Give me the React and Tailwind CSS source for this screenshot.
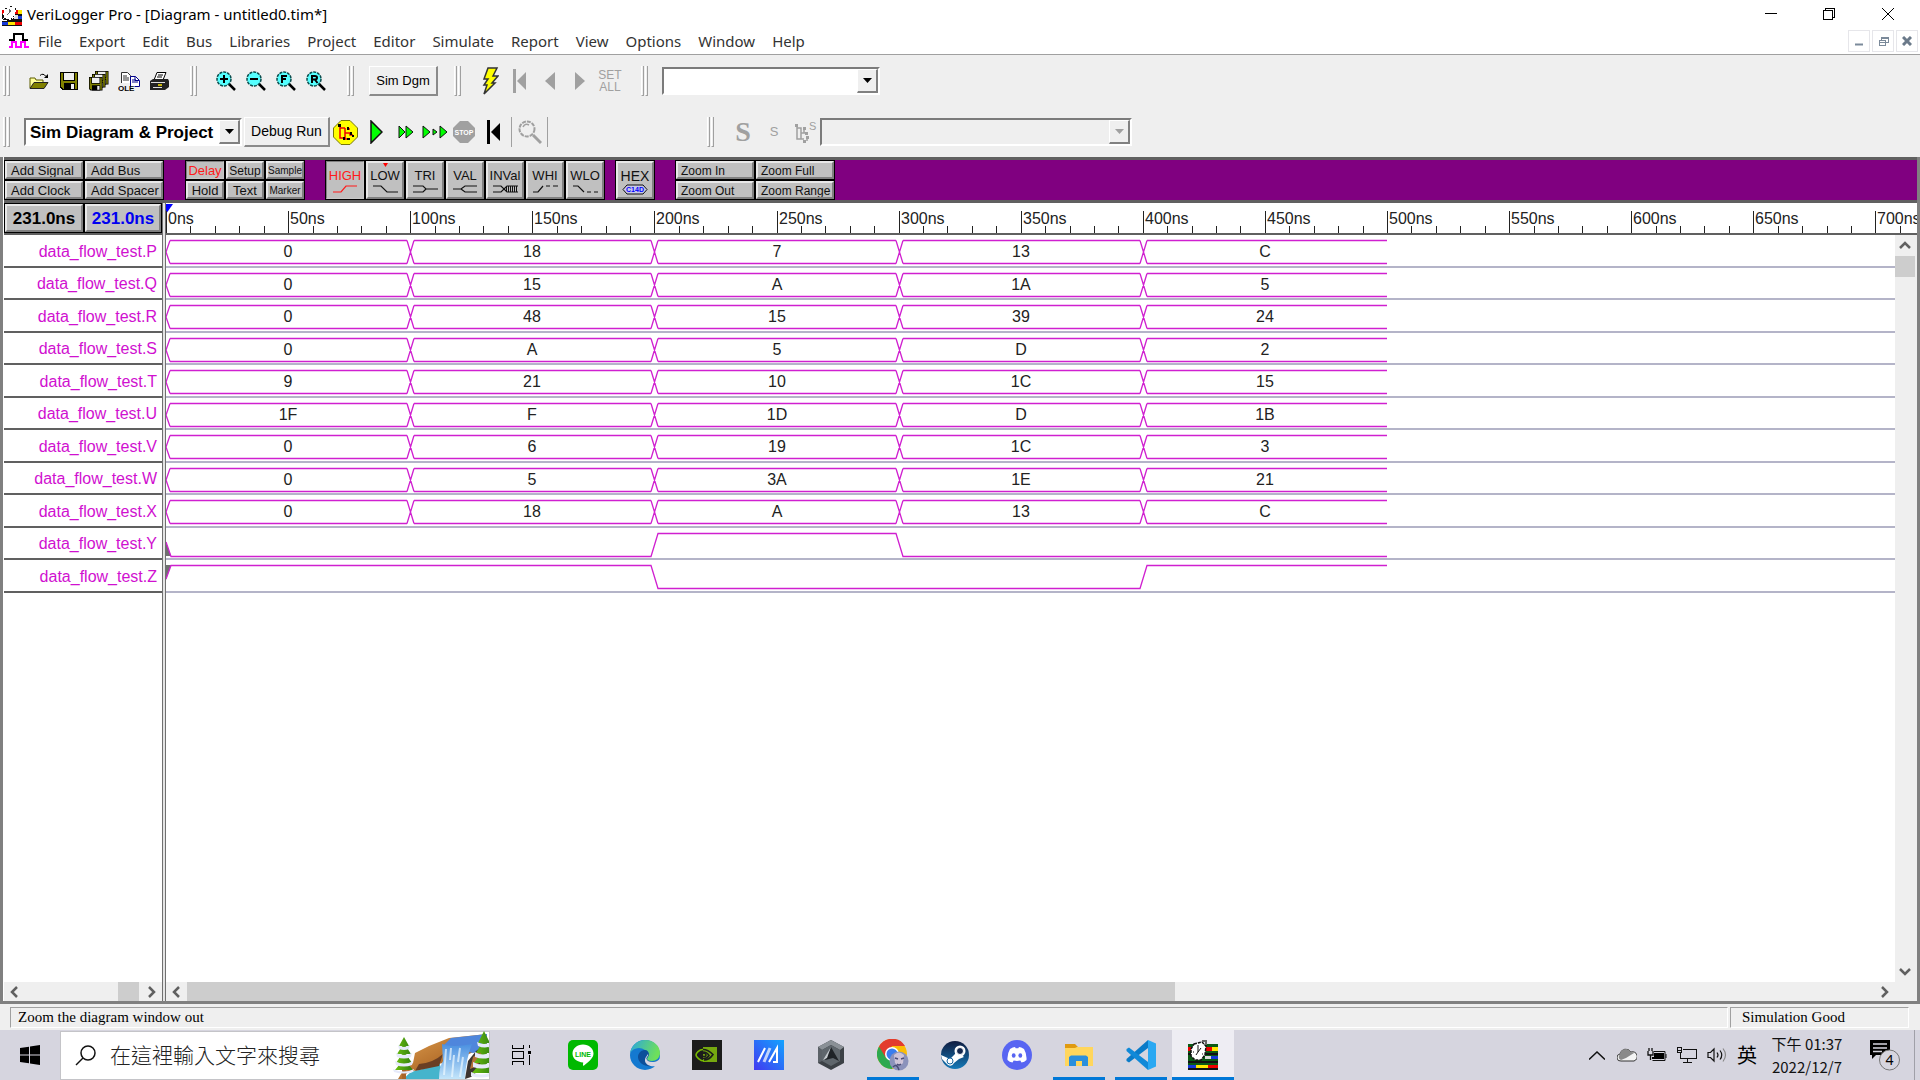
import React from "react";

const SANS = "font-['Liberation_Sans',Arial,sans-serif]";
const UI = "font-['Noto_Sans','Noto_Sans_CJK_TC',sans-serif]";
const CJK = "font-['Noto_Sans_CJK_TC','Noto_Sans',sans-serif]";

const PX_PER_NS = 2.442;
const at = (ns) => Math.round(ns * PX_PER_NS);

const MENUS = ["File", "Export", "Edit", "Bus", "Libraries", "Project", "Editor", "Simulate", "Report", "View", "Options", "Window", "Help"];

const BUSES = [
  ["P", ["0", "18", "7", "13", "C"]],
  ["Q", ["0", "15", "A", "1A", "5"]],
  ["R", ["0", "48", "15", "39", "24"]],
  ["S", ["0", "A", "5", "D", "2"]],
  ["T", ["9", "21", "10", "1C", "15"]],
  ["U", ["1F", "F", "1D", "D", "1B"]],
  ["V", ["0", "6", "19", "1C", "3"]],
  ["W", ["0", "5", "3A", "1E", "21"]],
  ["X", ["0", "18", "A", "13", "C"]],
  ["Y", null],
  ["Z", null],
];

/* ---------- window chrome ---------- */

function AppLogo({ className }) {
  return (
    <svg viewBox="0 0 20 20" className={className} shapeRendering="crispEdges" aria-hidden="true">
      <path d="M0 4h5v5H0z" fill="#e00" />
      <path d="M12 4h5v4h-5z" fill="#e00" />
      <path d="M16 4h4v4h-4z" fill="#ffe600" />
      <path d="M0 8h20v8H0z" fill="#111" />
      <path d="M12 9h4v4h-4z" fill="#ddd" />
      <path d="M16 10h4v3h-4z" fill="#1538d8" />
      <path d="M0 16h6v3H0z" fill="#1538d8" />
      <path d="M6 16h7v3H6z" fill="#ffe600" />
      <path d="M13 16h7v3h-7z" fill="#e00" />
      <path d="M0 19h20v1H0z" fill="#111" />
      <path d="M3 3l3-2 6-1 2 2-1 9-4 3-5-1-3-4z" fill="#fff" />
      <path d="M3 3l3-2M8 0h3M13 2v3M12 10l-3 4M1 9l3 4" stroke="#111" fill="none" strokeDasharray="2 1" />
      <path d="M7 3v4l2-3M7 7L5 9" stroke="#666" fill="none" />
      <path d="M3 11l-3 3h5" stroke="#fff" fill="none" />
    </svg>
  );
}

function TitleBar() {
  return (
    <header className="flex h-7 items-center bg-white pl-0.5 pr-0.5">
      <AppLogo className="mt-1 h-5 w-5" />
      <h1 className={`${UI} ml-[5px] text-[15px] leading-5 text-black`}>VeriLogger Pro - [Diagram - untitled0.tim*]</h1>
      <div className="ml-auto flex h-7 items-center">
        <button aria-label="Minimize" className="flex h-7 w-[58px] items-center justify-center">
          <svg width="12" height="12" shapeRendering="crispEdges"><path d="M0 5.500h12" stroke="#000" /></svg>
        </button>
        <button aria-label="Restore" className="flex h-7 w-[58px] items-center justify-center">
          <svg width="12" height="12" fill="none" stroke="#000" shapeRendering="crispEdges"><path d="M.5 2.500h9v9h-9zM2.500 2.500v-2h9v9h-2" /></svg>
        </button>
        <button aria-label="Close" className="flex h-7 w-[60px] items-center justify-center">
          <svg width="12" height="12" stroke="#000"><path d="M0 0l12 12M12 0L0 12" /></svg>
        </button>
      </div>
    </header>
  );
}

function MenuBar() {
  const box = "flex h-[22px] w-[22px] items-center justify-center border border-[#e6e6ea]";
  return (
    <nav className="flex h-[27px] items-center border-b border-[#a0a0a0] bg-white pl-2">
      <svg width="21" height="16" className="mr-px shrink-0" fill="none" strokeWidth="2" shapeRendering="crispEdges" aria-hidden="true">
        <path d="M1 7h5V1h9v6h5" stroke="#000" />
        <path d="M1 14h3V9h4v5h5V9h4v5h4" stroke="#f0f" />
      </svg>
      {MENUS.map((m) => (
        <button key={m} className={`${UI} pl-2 pr-[9px] text-[15px] leading-5 text-[#333]`}>{m}</button>
      ))}
      <div className="ml-auto flex items-center gap-0.5 pr-0.5">
        <button aria-label="Minimize diagram" className={box}><svg width="8" height="10"><path d="M0 8.500h8" stroke="#7b8a9a" strokeWidth="2" /></svg></button>
        <button aria-label="Restore diagram" className={box}>
          <svg width="11" height="10" fill="none" stroke="#7b8a9a" shapeRendering="crispEdges"><path d="M1 4.500h6v5H1zM1 6h6M3.500 4V1h6.500v5H8M3.500 2h6" /></svg>
        </button>
        <button aria-label="Close diagram" className={box}><svg width="10" height="10"><path d="M1 1l8 8M9 1L1 9" stroke="#6b7a8a" strokeWidth="3" /></svg></button>
      </div>
    </nav>
  );
}

/* ---------- toolbars ---------- */

function Grip() {
  return (
    <span className="flex h-[30px] shrink-0 gap-px">
      <span className="w-[3px] border-b border-l border-r border-b-[#a0a0a0] border-l-white border-r-[#a0a0a0]" />
      <span className="w-[3px] border-b border-l border-r border-b-[#a0a0a0] border-l-white border-r-[#a0a0a0]" />
    </span>
  );
}

function Tool({ label, children, wide }) {
  return (
    <button aria-label={label} title={label} className={`flex h-[30px] shrink-0 items-center justify-center ${wide || "w-[30px]"}`}>
      {children}
    </button>
  );
}

function Floppy() {
  return (
    <>
      <path d="M0 0h18v18H2l-2-2z" fill="#000" />
      <path d="M1 1h16v16H3l-2-2z" fill="#808000" />
      <path d="M3 0h12v9H3z" fill="#000" />
      <path d="M4 1h10v7H4z" fill="#efefef" />
      <path d="M4 11h11v7H4z" fill="#000" />
      <path d="M11 12h3v5h-3z" fill="#efefef" />
    </>
  );
}

function Magnifier({ mark }) {
  return (
    <svg width="20" height="20" aria-hidden="true">
      <path d="M12.500 12.500l6.500 6.500" stroke="#000" strokeWidth="2.500" />
      <circle cx="8" cy="8" r="7" fill="#5ff" stroke="#0a4a4a" strokeWidth="1.500" strokeDasharray="3 1" />
      <path d={mark} stroke="#000" strokeWidth="2" fill="none" />
    </svg>
  );
}

const MARKS = [
  ["Zoom in", "M4 8h8M8 4v8"],
  ["Zoom out", "M4 8h8"],
  ["Zoom full", "M6 12V5h5M6 8h4"],
  ["Zoom range", "M6 12V5h3q2 0 2 1.700t-2 1.700H6M8.500 8l3 4"],
];

function Combo({ label, value, className, disabled, textClass }) {
  return (
    <div className={`flex h-7 shrink-0 border-2 border-b-white border-l-[#7b7b7b] border-r-white border-t-[#7b7b7b] ${disabled ? "bg-[#efefef]" : "bg-white"} ${className}`}>
      <select aria-label={label} disabled={disabled} className={`min-w-0 flex-1 appearance-none bg-transparent pl-1 outline-none ${textClass || ""}`}>
        <option>{value}</option>
      </select>
      <span className="pointer-events-none flex w-[21px] items-center justify-center border-b-2 border-l border-r-2 border-t border-b-[#808080] border-l-white border-r-[#808080] border-t-white bg-[#efefef]">
        <svg width="9" height="5"><path d="M0 0h9L4.500 5z" fill={disabled ? "#a0a0a0" : "#000"} /></svg>
      </span>
    </div>
  );
}

const raised = "border border-b-2 border-r-2 border-b-[#8a8a8a] border-l-white border-r-[#8a8a8a] border-t-white";

function Toolbars() {
  return (
    <div className="bg-[#efefef]">
      <div className="flex h-[52px] items-center pl-[3px]">
        <Grip />
        <div className="ml-[14px] flex">
          <Tool label="Open">
            <svg width="20" height="17" aria-hidden="true">
              <path d="M1 15V5h5l1 2h7v3" fill="#ffff9c" stroke="#5c5c00" />
              <path d="M1 15.500L5 9.500h14l-4 6z" fill="#808000" stroke="#222" />
              <path d="M11 2.500q3-3 6 1" fill="none" stroke="#000" /><path d="M19 1v4h-4z" fill="#000" />
            </svg>
          </Tool>
          <Tool label="Save"><svg width="18" height="18" shapeRendering="crispEdges"><Floppy /></svg></Tool>
          <Tool label="Save all">
            <svg width="20" height="20" viewBox="0 0 20 20">
              <g transform="translate(6 0) scale(.75)"><Floppy /></g>
              <g transform="translate(3 3) scale(.75)"><Floppy /></g>
              <g transform="translate(0 6) scale(.75)"><Floppy /></g>
            </svg>
          </Tool>
          <Tool label="Copy OLE">
            <svg width="23" height="21" aria-hidden="true">
              <path d="M3.500 12V1.500h6l3 3V12" fill="#fff" stroke="#333" />
              <path d="M5 5h4M5 7h6M5 9h6" stroke="#333" />
              <path d="M12.500 15V5.500h5l4 4V15.500h-5" fill="#fff" stroke="#00008b" />
              <path d="M14 9h4M14 11h6M17 5.500v4h4" stroke="#00008b" fill="none" />
              <text x="0" y="20" fontSize="8" fontWeight="bold" fontFamily="Liberation Sans">OLE</text>
            </svg>
          </Tool>
          <Tool label="Print">
            <svg width="21" height="19" aria-hidden="true">
              <path d="M5 8l3-7.500h9L14 8" fill="#fff" stroke="#000" />
              <path d="M9 3h5M8 5h5" stroke="#000" />
              <path d="M1 9l3-2h15l1 2v6l-4 3H1z" fill="#222" />
              <path d="M2 10.500h14M4 15.500h9" stroke="#ddd" /><path d="M9 13h4" stroke="#ffe600" strokeWidth="1.500" />
            </svg>
          </Tool>
        </div>
        <div className="ml-4 flex items-center">
          <Grip />
          <div className="ml-[14px] flex">
            {MARKS.map(([l, d]) => <Tool key={l} label={l}><Magnifier mark={d} /></Tool>)}
          </div>
        </div>
        <div className="ml-4 flex items-center">
          <Grip />
          <button className={`${SANS} ml-[15px] h-[30px] w-[69px] text-[13px] text-black ${raised}`}>Sim Dgm</button>
        </div>
        <div className="ml-4 flex items-center">
          <Grip />
          <div className="ml-[14px] flex">
            <Tool label="Simulate">
              <svg width="17" height="28" aria-hidden="true"><path d="M6 1h9l-4 8h5l-6 7h3L2 27l3-9H2l4-6H2z" fill="#ff0" stroke="#333" strokeWidth="1.500" /></svg>
            </Tool>
            <Tool label="First"><svg width="14" height="24"><path d="M1.500 0v24" stroke="#a0a0a0" strokeWidth="3" /><path d="M13 3v18L4 12z" fill="#a0a0a0" /></svg></Tool>
            <Tool label="Previous"><svg width="10" height="18"><path d="M10 0v18L0 9z" fill="#a0a0a0" /></svg></Tool>
            <Tool label="Next"><svg width="10" height="18"><path d="M0 0v18l10-9z" fill="#a0a0a0" /></svg></Tool>
            <Tool label="Set all"><span className={`${SANS} text-[12px] leading-3 text-[#a0a0a0]`}>SET<br />ALL</span></Tool>
          </div>
        </div>
        <div className="ml-4 flex items-center">
          <Grip />
          <Combo label="Signal" value="" className="ml-[14px] w-[218px]" />
        </div>
      </div>

      <div className="flex h-[50px] items-center pl-[3px]">
        <Grip />
        <Combo label="Simulation mode" value="Sim Diagram & Project" className="ml-[14px] w-[218px]" textClass={`${SANS} text-[17px] font-bold text-black`} />
        <button className={`${SANS} ml-0.5 h-[30px] w-[86px] text-[14px] text-black ${raised}`}>Debug Run</button>
        <Tool label="Build tree">
          <svg width="25" height="25" aria-hidden="true">
            <path d="M8 .5h9l7.500 7.500v9L17 24.500H8L.5 17V8z" fill="#ff0" stroke="#77770a" />
            <path d="M7 6v12h4M7 8h5M12 8v11h4M12 13h5M16 10v-2M17 13v2h3" stroke="#e00" strokeWidth="1.500" fill="none" />
            <path d="M5 4h3v3H5zM14 7h2v3h-2zM17 12h2v3h-2zM14 18h3v2h-3zM19 15h2v2h-2zM10 17h2v3h-2z" />
          </svg>
        </Tool>
        <Tool label="Run" wide="w-8"><svg width="13" height="24"><path d="M1 1v22l11-11z" fill="#0f0" stroke="#111" strokeWidth="1.500" /></svg></Tool>
        <Tool label="Step" wide="w-7"><svg width="16" height="14"><path d="M1 1v12l6-6zM8 1v12l7-6z" fill="#0f0" stroke="#111" /></svg></Tool>
        <Tool label="Step over" wide="w-[29px]"><svg width="26" height="14"><path d="M1 1v12l7-6zM11 4v6l4-3zM18 1v12l7-6z" fill="#0f0" stroke="#111" /></svg></Tool>
        <Tool label="Stop">
          <svg width="22" height="22" aria-hidden="true">
            <path d="M7 0h8l7 7v8l-7 7H7l-7-7V7z" fill="#a0a0a0" />
            <text x="11" y="14" textAnchor="middle" fontSize="7" fontWeight="bold" fill="#fff" fontFamily="Liberation Sans">STOP</text>
          </svg>
        </Tool>
        <Tool label="Restart"><svg width="14" height="24"><path d="M1.500 0v24" stroke="#000" strokeWidth="3" /><path d="M13 3v18L4 12z" /></svg></Tool>
        <div className="ml-0.5 flex h-[30px] w-[37px] items-center justify-center border-l border-r border-[#a0a0a0]">
          <Tool label="Find">
            <svg width="24" height="26" aria-hidden="true" fill="none" stroke="#a0a0a0">
              <circle cx="9" cy="10" r="7.500" strokeWidth="2" strokeDasharray="4 1" /><path d="M5 8q2-4 6-2" strokeWidth="1.500" />
              <path d="M15 16l8 8" strokeWidth="3" />
            </svg>
          </Tool>
        </div>
        <div className="ml-[159px] flex items-center">
          <Grip />
          <Tool label="Signals" wide="ml-[14px] w-[30px]"><span className="font-['Liberation_Serif',serif] text-[28px] font-bold leading-7 text-[#a0a0a0]">S</span></Tool>
          <Tool label="Small signals" wide="w-8"><span className={`${SANS} text-[13px] leading-4 text-[#a0a0a0]`}>S</span></Tool>
          <Tool label="Signal tree" wide="w-[30px]">
            <svg width="23" height="24" aria-hidden="true" fill="none" stroke="#a0a0a0">
              <path d="M3 5v14h5M3 8h4v11M7 13h6M10 9v4M13 17v4M7 19h3" strokeWidth="1.500" />
              <path d="M1 4h3v3H1zM9 7h3v3H9zM11 12h3v3h-3zM12 16h3v3h-3zM9 20h3v3H9z" fill="#a0a0a0" stroke="none" />
              <text x="15" y="10" fontSize="11" fill="#a0a0a0" stroke="none" fontFamily="Liberation Sans">S</text>
            </svg>
          </Tool>
          <Combo label="Scope" value="" disabled className="w-[312px]" />
        </div>
      </div>
    </div>
  );
}

/* ---------- purple button bar ---------- */

function Key({ children, active, className, align }) {
  return (
    <button
      className={`${SANS} flex flex-col justify-center overflow-hidden whitespace-nowrap bg-[#c0c0c0] outline outline-1 -outline-offset-1 outline-black ${align || "items-center"} ${
        active
          ? "border-2 border-b-[#c8c8c8] border-l-[#808080] border-r-[#c8c8c8] border-t-[#808080] text-[#ff1a1a]"
          : "border-[3px] border-b-[#808080] border-l-[#e8e8e8] border-r-[#808080] border-t-[#e8e8e8] text-[#111]"
      } ${className}`}
    >
      {children}
    </button>
  );
}

const STATES = [
  ["HIGH", "M1 8h8l5-6h11", ""],
  ["LOW", "M1 2h8l6 6h11", ""],
  ["TRI", "M1 2h10l3 3h12M1 8h10l3-3", ""],
  ["VAL", "M1 5h8l4-3h12M9 5l4 3h12", ""],
  ["INVal", "M1 2h8l6 6h11M1 8h8l6-6h11", "M14 5h12"],
  ["WHI", "M1 8h5l5-6M14 2h4M21 2h5", ""],
  ["WLO", "M1 2h5l6 6M15 8h4M22 8h4", ""],
];

function ButtonBar() {
  const wide = "h-5 w-20 pl-1 pt-px text-[13px] leading-[14px]";
  const zoomKey = "h-5 w-20 pl-[3px] pt-px text-[12px] leading-[14px]";
  const slim = "h-5 w-10 pt-px text-[13px] leading-[14px]";
  const tiny = "h-5 w-10 pt-px text-[10px] leading-[14px]";
  return (
    <div className="flex h-[46px] border-y-[3px] border-[#606060] bg-[#800080]">
      <div className="grid shrink-0 grid-cols-2">
        {["Add Signal", "Add Bus", "Add Clock", "Add Spacer"].map((t) => <Key key={t} align="items-start" className={wide}>{t}</Key>)}
      </div>
      <div className="ml-[21px] grid shrink-0 grid-cols-3">
        <Key active className={slim}>Delay</Key>
        <Key className="h-5 w-10 pt-px text-[12px] leading-[14px]">Setup</Key>
        <Key className={tiny}>Sample</Key>
        <Key className={slim}>Hold</Key>
        <Key className={slim}>Text</Key>
        <Key className={tiny}>Marker</Key>
      </div>
      <div className="ml-5 flex shrink-0">
        {STATES.map(([t, d, fill], i) => (
          <Key key={t} active={i === 0} className="relative h-10 w-10 pt-0.5 text-[13px] leading-4">
            {t === "LOW" && <svg width="5" height="4" className="absolute left-[15px] top-0"><path d="M0 0h5L2.500 4z" fill="#f00" /></svg>}
            {t}
            <svg width="27" height="10" fill="none" stroke="currentColor" strokeWidth="1.200" aria-hidden="true">
              <path d={d} />
              {fill && <path d={fill} strokeWidth="6" strokeDasharray="1 1" />}
            </svg>
          </Key>
        ))}
      </div>
      <Key className="ml-2.5 h-10 w-10 shrink-0 pt-0.5 text-[14px] leading-4">
        HEX
        <svg width="26" height="11" aria-hidden="true">
          <path d="M1 5.500L5 1h16l4 4.500L21 10H5z" fill="#c8c8e8" stroke="#111" />
          <text x="13" y="8" textAnchor="middle" fontSize="7" fontWeight="bold" fill="#00f" fontFamily="Liberation Sans">C14D</text>
        </svg>
      </Key>
      <div className="ml-5 grid shrink-0 grid-cols-2">
        {["Zoom In", "Zoom Full", "Zoom Out", "Zoom Range"].map((t) => <Key key={t} align="items-start" className={zoomKey}>{t}</Key>)}
      </div>
    </div>
  );
}

/* ---------- diagram ---------- */

function Ruler() {
  const ticks = Array.from({ length: 72 }, (_, i) => i * 10);
  return (
    <svg className="block h-[30px] w-full" aria-label="Time ruler">
      <path d="M0 1h7L0 11z" fill="#00f" />
      {ticks.map((ns) => (
        <g key={ns}>
          <rect x={at(ns)} y={ns % 50 ? 23 : 8} width="1" height={ns % 50 ? 7 : 22} fill="#222" />
          {ns % 50 === 0 && <text x={at(ns) + 2} y="21" fontSize="16" fill="#222" className={SANS}>{ns}ns</text>}
        </g>
      ))}
    </svg>
  );
}

function busPath() {
  let d = `M0 17L4 5.500M0 17L4 28.500`;
  for (let k = 0; k < 5; k++) {
    const a = at(k * 100) + 4;
    const last = k === 4;
    const b = at((k + 1) * 100) + (last ? 0 : -3);
    d += `M${a} 5.500H${b}M${a} 28.500H${b}`;
    if (!last) d += `M${b} 5.500L${b + 7} 28.500M${b} 28.500L${b + 7} 5.500`;
  }
  return d;
}

function Wave({ name, values }) {
  const end = at(500);
  if (values) {
    return (
      <svg className="block h-full w-full" fill="none" aria-label={`Waveform ${name}`}>
        <path d={busPath()} stroke="#d020d0" strokeWidth="1.300" />
        {values.map((v, i) => (
          <text key={i} x={at(i * 100 + 50)} y="22" textAnchor="middle" fontSize="16" fill="#222" className={SANS}>{v}</text>
        ))}
      </svg>
    );
  }
  const y = name === "Y";
  return (
    <svg className="block h-full w-full" fill="none" aria-label={`Waveform ${name}`}>
      <path d={y ? "M0 14L5 28H0z" : "M0 5H5L0 20z"} fill="#707070" />
      <path
        d={y
          ? `M0 14L5 28.500H${at(200) - 3}L${at(200) + 4} 5.500H${at(300) - 3}L${at(300) + 4} 28.500H${end}`
          : `M0 19L5 5.500H${at(200) - 3}L${at(200) + 4} 28.500H${at(400) - 3}L${at(400) + 4} 5.500H${end}`}
        stroke="#d020d0" strokeWidth="1.300"
      />
    </svg>
  );
}

const chevrons = { left: "M7 1L2 6l5 5", right: "M2 1l5 5-5 5" };

function Chevron({ dir }) {
  const vertical = dir === "up" || dir === "down";
  return (
    <svg width={vertical ? 12 : 9} height={vertical ? 9 : 12} fill="none" stroke="#606060" strokeWidth="2.500" aria-hidden="true">
      <path d={dir === "up" ? "M1 7l5-5 5 5" : dir === "down" ? "M1 2l5 5 5-5" : chevrons[dir]} />
    </svg>
  );
}

const rowHeight = (i) => (i % 2 ? "h-8" : "h-[33px]");

function Workspace() {
  return (
    <main className="flex flex-1 flex-col border-x-[3px] border-b-[3px] border-[#808080] bg-white">
      <div className="flex flex-col pl-px"><ButtonBar /></div>
      <div className="flex flex-1">
        <section className="flex w-[159px] shrink-0 flex-col pl-px">
          <div className={`${SANS} flex h-8 border-b-2 border-[#606060] text-[17px] font-bold`}>
            <Key className="w-20 pt-0.5"><span className="text-black">231.0ns</span></Key>
            <Key className="flex-1 pt-0.5"><span className="text-[#0000f0]">231.0ns</span></Key>
          </div>
          <ul className={`${SANS} text-[16px] text-[#d010d0]`}>
            {BUSES.map(([n], i) => (
              <li key={n} className={`flex items-center justify-end border-b-2 border-[#606060] pr-[5px] pt-0.5 ${rowHeight(i)}`}>data_flow_test.{n}</li>
            ))}
          </ul>
          <div className="mt-auto flex h-[19px] items-center bg-[#efefef] px-[6px]">
            <button aria-label="Scroll names left"><Chevron dir="left" /></button>
            <span className="ml-auto mr-2 h-full w-[21px] bg-[#cdcdcd]" />
            <button aria-label="Scroll names right"><Chevron dir="right" /></button>
          </div>
        </section>
        <div className="w-1 shrink-0 cursor-col-resize border-l border-r border-[#707070] bg-[#e4e4e4]" />
        <section className="flex min-w-0 flex-1 flex-col">
          <div className="h-8 border-b-2 border-[#606060]"><Ruler /></div>
          <div className="flex flex-1">
            <div className="min-w-0 flex-1">
              {BUSES.map(([n, values], i) => (
                <div key={n} className={`border-b-2 border-[#b4b4c8] ${rowHeight(i)}`}><Wave name={n} values={values} /></div>
              ))}
            </div>
            <div className="flex w-[22px] flex-col items-center bg-[#efefef] pr-0.5">
              <button aria-label="Scroll up" className="flex h-[21px] items-center"><Chevron dir="up" /></button>
              <span className="h-[21px] w-full bg-[#cdcdcd]" />
              <button aria-label="Scroll down" className="mt-auto flex h-[21px] items-center"><Chevron dir="down" /></button>
            </div>
          </div>
          <div className="flex h-[19px] items-center bg-[#efefef] pl-[6px] pr-7">
            <button aria-label="Scroll left" className="mr-[6px]"><Chevron dir="left" /></button>
            <span className="flex h-full flex-1"><span className="w-7/12 bg-[#cdcdcd]" /></span>
            <button aria-label="Scroll right"><Chevron dir="right" /></button>
          </div>
        </section>
      </div>
    </main>
  );
}

function StatusBar() {
  const cell = "h-[21px] border border-b-white border-l-[#a0a0a0] border-r-white border-t-[#a0a0a0] font-['Liberation_Serif',serif] text-[15px] leading-[18px] text-black";
  return (
    <footer className="flex h-[26px] items-center gap-0.5 bg-[#efefef] pl-2.5 pr-[11px]">
      <div className={`${cell} flex-1 pl-[7px]`}>Zoom the diagram window out</div>
      <div className={`${cell} w-[179px] pl-[11px]`}>Simulation Good</div>
    </footer>
  );
}

/* ---------- taskbar ---------- */

function Scenery() {
  return (
    <svg width="96" height="48" viewBox="0 0 96 48" aria-hidden="true">
      <defs>
        <linearGradient id="rock" x1="0" y1="0" x2="1" y2="1"><stop offset="0" stopColor="#e0a050" /><stop offset=".6" stopColor="#b06a28" /><stop offset="1" stopColor="#5a3a28" /></linearGradient>
        <linearGradient id="fall" x1="0" y1="0" x2="0" y2="1"><stop offset="0" stopColor="#4a8fe0" /><stop offset="1" stopColor="#c4e6fa" /></linearGradient>
        <linearGradient id="tree" x1="0" y1="0" x2="1" y2="0"><stop offset="0" stopColor="#6cc010" /><stop offset="1" stopColor="#2f7d10" /></linearGradient>
      </defs>
      <path d="M22 22l14-7 20-8 38-4v12L60 30 40 34 14 42 10 48H5l6-10 9-6z" fill="url(#rock)" />
      <path d="M12 48q2-7 14-9 12-3 20-8l6 17z" fill="#45b4cc" />
      <path d="M26 33q14-1 24-10l-4 12-24 5z" fill="#6a3f24" />
      <path d="M50 15l8-8 36-4v10q-6 8-14 9z" fill="#4f86dc" />
      <path d="M49 13q10 4 30 0-6 14-7 35H46q0-12 4-18z" fill="url(#fall)" />
      <path d="M53 18l-2 26M58 17l-1 12M61 24l-2 22M67 17l-2 14M70 26l-3 20" stroke="#eef9ff" strokeWidth="2" opacity=".7" />
      <path d="M94 12v20L78 46l-6 2 3-18 8-10z" fill="#3c3430" />
      <path d="M94 14v10L82 36l-5 2 3-12z" fill="#b5703a" />
      <path d="M9 38h4v10H9z" fill="#a8642a" />
      <g fill="url(#tree)"><path d="M11 6l5 9H6zM11 12l7 11H4zM11 20l8 12H3zM11 28l9 11H2z" /></g>
      <g fill="#e6eafa"><path d="M5 14q6 4 12 0l-1 4q-5 2-10 0zM3 22q8 4 16 0l-1 4q-7 3-14 0zM2 30q9 5 18 0l-1 4q-8 3-16 0zM0 38q11 5 21 0l-1 3q-9 3-19 0z" /></g>
      <g fill="url(#tree)"><path d="M91 0l6 12H85zM91 8l8 14H83zM91 18l9 14H81zM91 28l10 14H79z" /></g>
      <g fill="#e6eafa"><path d="M84 11q7 4 14 0v4q-6 3-13 0zM82 21q8 5 16 0v5q-8 3-16 0zM80 31q9 5 18 0v5q-9 3-18 0zM78 41q10 5 20 0v4q-9 3-20 0z" /></g>
    </svg>
  );
}

const ICONS = {
  LINE: (
    <svg width="30" height="30" viewBox="0 0 30 30"><rect width="30" height="30" rx="5" fill="#00b900" /><path d="M15 4.500c6 0 10.500 4 10.500 9 0 4-3.500 7.500-9.500 12-.8.500-1.200 0-1-1l.2-2C9 22 4.500 18.500 4.500 13.500c0-5 4.500-9 10.500-9z" fill="#fff" /><text x="15" y="16.500" textAnchor="middle" fontSize="7" fontWeight="bold" fill="#00b900" fontFamily="Liberation Sans">LINE</text></svg>
  ),
  Edge: (
    <svg width="30" height="30" viewBox="0 0 30 30">
      <defs><linearGradient id="eg" x1="0" y1="0" x2="1" y2=".3"><stop offset="0" stopColor="#2aa5e0" /><stop offset="1" stopColor="#6ee05a" /></linearGradient></defs>
      <circle cx="15" cy="15" r="15" fill="#1479d0" />
      <path d="M0 14C1 5 8 0 15 0c9 0 15 6 15 13 0 5-4 8-8 8-3 0-5-1-5-2s1-1 1-4c0-4-5-7-9-7-5 0-9 4-9 6z" fill="url(#eg)" />
      <path d="M8 16c1-4 4-6 7-6 2 0 4 2 4 4.500 0 2-2 2.500-2 4 0 2 3 3.500 6 3.500 2 0 4-1 5.500-2-2 5-7 7-11 6-6-1-10-5-9.500-10z" fill="#0d4f9a" />
      <path d="M18 14c1 2-2 3-1.500 5 .5 2 4 3.500 7 3 2 0 4-1 6.500-3V26l-1 0c-3 0-8 1-11-1-3-2-4-5-2-8z" fill="#d8d6e2" />
    </svg>
  ),
  NVIDIA: (
    <svg width="30" height="30" viewBox="0 0 30 30"><path d="M0 0h30v30H0z" fill="#1c1c1c" /><path d="M11 7h14v15H11z" fill="#76a810" /><g fill="none" strokeWidth="1.600"><path d="M11 9.500c-4 0-7 4-7 5.500s4 6 8 6c3 0 6-2 8-4" stroke="#76b900" /><path d="M11 9.500c5 0 8 3 10 5-2 3-6 5.500-9 5.500" stroke="#1c1c1c" /><path d="M11 12c-3 0-4 2-4 3s2 3.500 5 3.500 5-3 5-3-2-3.500-6-3.500z" stroke="#1c1c1c" /><path d="M10 13.500c2-1 4 0 4 1.500s-2 2-3 1" stroke="#1c1c1c" /></g></svg>
  ),
  MyASUS: (
    <svg width="30" height="30" viewBox="0 0 30 30"><defs><linearGradient id="ma" x1="0" y1="1" x2="1" y2="0"><stop offset="0" stopColor="#4338f0" /><stop offset="1" stopColor="#12a4ff" /></linearGradient></defs><path d="M0 0h30v30H0z" fill="url(#ma)" /><g stroke="#fff" strokeWidth="2" fill="none"><path d="M4 22L11 8M15 22l8-14v14h-4" /><path d="M10 22L16 8" strokeWidth="3" opacity=".7" /></g></svg>
  ),
  "Armoury Crate": (
    <svg width="28" height="30" viewBox="0 0 28 30"><path d="M14 0l13 7v16l-13 7L1 23V7z" fill="#3c4146" /><path d="M14 0l13 7-4 3-9-5-9 5-4-3z" fill="#8a9096" /><path d="M1 7l4 3v11l-4 2z" fill="#5c6268" /><path d="M14 5l9 5v11l-9 5-9-5V10z" fill="#5f666c" /><path d="M14 7l8 14-6-3-8 2z" fill="#1f2327" /><path d="M14 7l-8 13 4-2z" fill="#c5cace" /></svg>
  ),
  Chrome: (
    <svg width="32" height="32" viewBox="0 0 32 32"><circle cx="15" cy="15" r="15" fill="#fbbc05" /><path d="M2 7.500A15 15 0 0 0 15 30l6-11-6-4z" fill="#2da94f" /><path d="M2 7.500L9 19l6-12h13A15 15 0 0 0 2 7.500z" fill="#e33b2e" /><circle cx="15" cy="15" r="7" fill="#fff" /><circle cx="15" cy="15" r="5.500" fill="#3b7ded" /><circle cx="22" cy="22" r="9.500" fill="#8b92bb" /><path d="M17 16q5-5 10 0l-1 8q-4 5-8 0z" fill="#cfc4d8" /><path d="M18 19l3 1M24 20l3-1M20 25q2 2 4 0M16 28q4-4 6 3" stroke="#4b4c78" strokeWidth="1.500" fill="none" /></svg>
  ),
  Steam: (
    <svg width="30" height="30" viewBox="0 0 30 30"><defs><linearGradient id="st" x1="0" y1="0" x2="0" y2="1"><stop offset="0" stopColor="#101c40" /><stop offset="1" stopColor="#157ab8" /></linearGradient></defs><circle cx="15" cy="15" r="14" fill="url(#st)" /><path d="M1 15l9 4 5-5 1-4 8 7-5 2-5 4q-2 4-6 2L2 19z" fill="#fff" /><circle cx="20" cy="11" r="5.500" fill="#fff" /><circle cx="20" cy="11" r="3.500" fill="#14284f" stroke="#fff" /><circle cx="10" cy="21" r="3" fill="#fff" stroke="#1565a0" /></svg>
  ),
  Discord: (
    <svg width="30" height="30" viewBox="0 0 30 30"><circle cx="15" cy="15" r="15" fill="#5865f2" /><path d="M8 9q3-2 5-2l.7 1.300h2.600L17 7q2 0 5 2 3 5 2.500 11-2 2-5 2.500l-1.200-2q-3.300.8-6.600 0l-1.200 2q-3-.5-5-2.500Q5 14 8 9z" fill="#fff" /><ellipse cx="11.700" cy="15.500" rx="1.900" ry="2.200" fill="#5865f2" /><ellipse cx="18.300" cy="15.500" rx="1.900" ry="2.200" fill="#5865f2" /></svg>
  ),
  "File Explorer": (
    <svg width="28" height="24" viewBox="0 0 28 24"><path d="M0 1h10l3 3h14v7H0z" fill="#e09a10" /><path d="M0 5h10l2-1h16v19H0z" fill="#ffd65c" /><path d="M4 23v-9l2-1.500h15l2 1.500v9h-6v-5h-6v5z" fill="#2b8fdc" /></svg>
  ),
  "VS Code": (
    <svg width="30" height="30" viewBox="0 0 30 30"><path d="M22 0v8L3 22.500.5 21v-2z" fill="#0a7bc8" /><path d="M.5 9L3 7.500l19 14.500V30L.5 11z" fill="#1089d8" /><path d="M22 0l8 3.500v23L22 30z" fill="#2aa8f2" /></svg>
  ),
  VeriLogger: (
    <svg width="30" height="30" viewBox="0 0 30 30"><path d="M0 4h30v26H0z" fill="#0b5a14" /><path d="M0 13h30v2H0zM0 21h30v2H0zM0 28h30v2H0z" fill="#111" /><path d="M0 7h5v4H0zM18 7h6v4h-6z" fill="#e00" /><path d="M24 7h6v4h-6z" fill="#ffe600" /><path d="M17 16h6v3h-6z" fill="#ddd" /><path d="M23 16h7v3h-7zM0 25h8v3H0z" fill="#1538d8" /><path d="M8 25h12v3H8z" fill="#ffe600" /><path d="M20 25h10v3H20z" fill="#e00" /><path d="M6 4l8-2 4 4-1 9-4 5-6 0-4-4 0-7z" fill="#fff" stroke="#111" strokeWidth="1.500" strokeDasharray="3 1" /><path d="M10 5v7l3-4M10 12l-2 3M5 12h1M14 14h1" stroke="#111" fill="none" /><path d="M14 1h4v4" stroke="#666" strokeWidth="2" fill="none" /></svg>
  ),
};

const RUNNING = { Chrome: true, "File Explorer": true, "VS Code": true };

function Taskbar() {
  const tray = "flex h-full w-[30px] items-center justify-center";
  return (
    <div className="flex h-[50px] items-center bg-[#d6d5df]">
      <button aria-label="Start" className="flex h-full w-[60px] items-center justify-center">
        <svg width="20" height="20"><path d="M0 3l9-1.300V9.500H0zM10 1.500L20 0v9.500H10zM0 10.500h9v7.800L0 17zM10 10.500h10V20l-10-1.500z" /></svg>
      </button>
      <label className="flex h-[49px] w-[430px] items-center border border-[#c4c4c8] bg-white pl-3.5">
        <svg width="21" height="21" fill="none" stroke="#111" strokeWidth="1.500" aria-hidden="true"><circle cx="13" cy="8" r="7" /><path d="M8 13L1 20" /></svg>
        <input aria-label="搜尋" placeholder="在這裡輸入文字來搜尋" className={`${CJK} ml-3.5 min-w-0 flex-1 bg-transparent text-[21px] font-light outline-none placeholder:text-[#222]`} />
        <Scenery />
      </label>
      <button aria-label="Task view" className="flex h-full w-[62px] items-center justify-center">
        <svg width="21" height="20" fill="none" stroke="#000" strokeWidth="1" shapeRendering="crispEdges"><path d="M1.500 0v3.500h11V0M1.500 20v-3.500h11v3.500M1.500 6.500h11v7h-11zM18.500 0v3M18.500 10v10" /><path d="M17 6h3v3h-3z" fill="#000" stroke="none" /></svg>
      </button>
      {Object.keys(ICONS).map((name) => (
        <button
          key={name}
          aria-label={name}
          className={`relative flex h-full w-[62px] shrink-0 items-center justify-center ${name === "VeriLogger" ? "bg-[#eeedf3]" : ""}`}
        >
          {ICONS[name]}
          {RUNNING[name] && <span className="absolute inset-x-[5px] bottom-0 h-[3px] bg-[#0078d7]" />}
          {name === "VeriLogger" && <span className="absolute inset-x-0 bottom-0 h-[3px] bg-[#0078d7]" />}
        </button>
      ))}
      <div className="ml-auto flex h-full items-center">
        <button aria-label="Hidden icons" className={tray}><svg width="16" height="9" fill="none" stroke="#111" strokeWidth="1.500"><path d="M0 8.500l8-7.500 8 7.500" /></svg></button>
        <button aria-label="OneDrive" className={tray}>
          <svg width="20" height="14"><path d="M4 13a3.500 3.500 0 0 1-1-7 6 6 0 0 1 11-2 4.500 4.500 0 0 1 3 9z" fill="#f4f4f4" stroke="#333" /><path d="M3 6a6 6 0 0 1 11-2q2 0 3 1l-8 5-5 2q-4-2-1-6z" fill="#8a8a8a" /></svg>
        </button>
        <button aria-label="Battery" className={tray}>
          <svg width="20" height="15" fill="none" stroke="#111"><path d="M1 3v4h5V3M2 0v3M5 0v3M3.500 7v5" strokeWidth="1.300" /><path d="M7 3.500h11v9H5.500M19 6v4" /><path d="M7 5h10v6H5V9h2z" fill="#000" stroke="none" /></svg>
        </button>
        <button aria-label="Network" className={tray}>
          <svg width="20" height="16" fill="none" stroke="#111" shapeRendering="crispEdges"><path d="M6 2.500h13.500v9H3.500V6M10.500 12v3M6 15.500h9M.5.500h4v5h-4zM1 3h4" /></svg>
        </button>
        <button aria-label="Volume" className={tray}>
          <svg width="20" height="16" fill="none" stroke="#111" strokeWidth="1.200"><path d="M1 5.500h2.500L7 2v12l-3.500-3.500H1zM10 5.500q2 2.500 0 5M13 3.500q3.500 4.500 0 9" /><path d="M16 1.500q5 6.500 0 13" stroke="#888" /></svg>
        </button>
        <button aria-label="Input language" className={`${CJK} flex h-full w-[30px] items-center justify-center text-[20px] text-black`}>英</button>
        <time className={`${CJK} ml-[5px] w-[80px] text-center text-[15px] leading-[23px] text-[#111]`}>下午 01:37<br />2022/12/7</time>
        <button aria-label="Notifications" className="ml-[18px] flex h-full w-[38px] items-center justify-center">
          <svg width="31" height="32" aria-hidden="true">
            <path d="M1 1h20v15H7l-4 4v-4H1z" fill="#000" /><path d="M4 5h14M4 9h14M4 12.500h9" stroke="#d6d5df" strokeWidth="1.500" />
            <circle cx="20.500" cy="21" r="10" fill="#d6d5df" stroke="#777" />
            <text x="20.500" y="26" textAnchor="middle" fontSize="14" fontFamily="Noto Sans">4</text>
          </svg>
        </button>
        <button aria-label="Show desktop" className="ml-[11px] h-full w-[6px] border-l border-[#a0a0a8]" />
      </div>
    </div>
  );
}

export default function App() {
  return (
    <div className="flex min-h-screen flex-col overflow-hidden bg-[#efefef]">
      <TitleBar />
      <MenuBar />
      <Toolbars />
      <Workspace />
      <StatusBar />
      <Taskbar />
    </div>
  );
}
